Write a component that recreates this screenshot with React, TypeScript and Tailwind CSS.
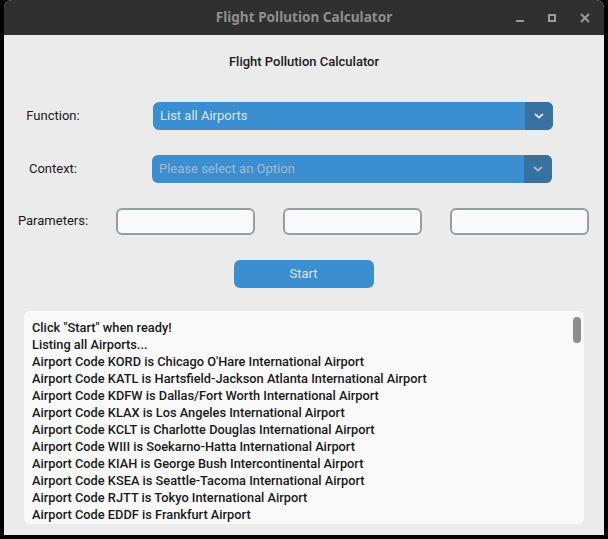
import React from "react";

const lines = [
  'Click "Start" when ready!',
  "Listing all Airports...",
  "Airport Code KORD is Chicago O'Hare International Airport",
  "Airport Code KATL is Hartsfield-Jackson Atlanta International Airport",
  "Airport Code KDFW is Dallas/Fort Worth International Airport",
  "Airport Code KLAX is Los Angeles International Airport",
  "Airport Code KCLT is Charlotte Douglas International Airport",
  "Airport Code WIII is Soekarno-Hatta International Airport",
  "Airport Code KIAH is George Bush Intercontinental Airport",
  "Airport Code KSEA is Seattle-Tacoma International Airport",
  "Airport Code RJTT is Tokyo International Airport",
  "Airport Code EDDF is Frankfurt Airport",
];

function Chevron({ color }: { color: string }) {
  return (
    <svg width="10" height="6" viewBox="0 0 10 6" fill="none">
      <path d="M1 1l4 3.5L9 1" stroke={color} strokeWidth="1.8" />
    </svg>
  );
}

function Dropdown({ text, placeholder }: { text: string; placeholder?: boolean }) {
  return (
    <div className="flex h-[28px] w-[400px] overflow-hidden rounded-[6px] bg-[#3b8ed0]">
      <div
        className={`flex flex-1 items-center pl-[7px] text-[13px] ${
          placeholder ? "text-[#a9b9c9]" : "text-[#dce4ee]"
        }`}
      >
        {text}
      </div>
      <div className="flex w-[28px] items-center justify-center bg-[#36719f]">
        <Chevron color={placeholder ? "#a9b9c9" : "#dce4ee"} />
      </div>
    </div>
  );
}

export default function App() {
  return (
    <div className="h-[539px] w-[608px] bg-black px-[4px] pb-[4px]" style={{ fontFamily: "Roboto, sans-serif" }}>
      <div className="flex h-[535px] w-[600px] flex-col overflow-hidden rounded-t-[8px] bg-[#ebebeb]">
        {/* Title bar */}
        <div className="relative flex h-[35px] items-center justify-center bg-[#303030]">
          <span
            className="text-[13.6px] font-bold text-[#8f8f8f]"
            style={{ fontFamily: '"Noto Sans", sans-serif' }}
          >
            Flight Pollution Calculator
          </span>
          <div className="absolute right-[14px] top-0 flex h-[35px] items-center gap-[24px]">
            <div className="mt-[6px] h-[2px] w-[8px] bg-[#9a9a9a]" />
            <div className="h-[8px] w-[8px] border-2 border-[#9a9a9a]" />
            <svg width="10" height="10" viewBox="0 0 10 10">
              <path d="M1 1l8 8M9 1L1 9" stroke="#9a9a9a" strokeWidth="2" />
            </svg>
          </div>
        </div>

        {/* Body */}
        <div className="flex flex-col">
          <div className="mt-[17px] text-center text-[13px] font-medium text-[#1a1a1a]">
            Flight Pollution Calculator
          </div>

          <div className="mt-[30px] flex items-center">
            <div className="w-[98px] text-center text-[13px] text-[#1a1a1a]">Function:</div>
            <div className="ml-[51px]">
              <Dropdown text="List all Airports" />
            </div>
          </div>

          <div className="mt-[25px] flex items-center">
            <div className="w-[98px] text-center text-[13px] text-[#1a1a1a]">Context:</div>
            <div className="ml-[50px]">
              <Dropdown text="Please select an Option" placeholder />
            </div>
          </div>

          <div className="mt-[25px] flex items-center">
            <div className="w-[98px] text-center text-[13px] text-[#1a1a1a]">Parameters:</div>
            <div className="ml-[14px] flex gap-[28px]">
              {[0, 1, 2].map((i) => (
                <input
                  key={i}
                  className="h-[27px] w-[139px] rounded-[6px] border-2 border-[#979da2] bg-[#f9f9fa] outline-none"
                />
              ))}
            </div>
          </div>

          <div className="mt-[25px] flex justify-center pr-[1px]">
            <button className="h-[28px] w-[140px] rounded-[6px] bg-[#3b8ed0] text-[13px] text-[#dce4ee]">
              Start
            </button>
          </div>

          <div className="relative mx-[20px] mt-[23px] h-[213px] overflow-hidden rounded-[6px] bg-[#f9f9fa]">
            <div className="pl-[8px] pt-[8px] text-[12.8px] font-medium leading-[17px] text-[#1a1a1a]">
              {lines.map((l) => (
                <div key={l} className="whitespace-nowrap">
                  {l}
                </div>
              ))}
            </div>
            <div className="absolute right-[3px] top-[6px] h-[26px] w-[8px] rounded-full bg-[#8d8d8d]" />
          </div>
        </div>
      </div>
    </div>
  );
}
